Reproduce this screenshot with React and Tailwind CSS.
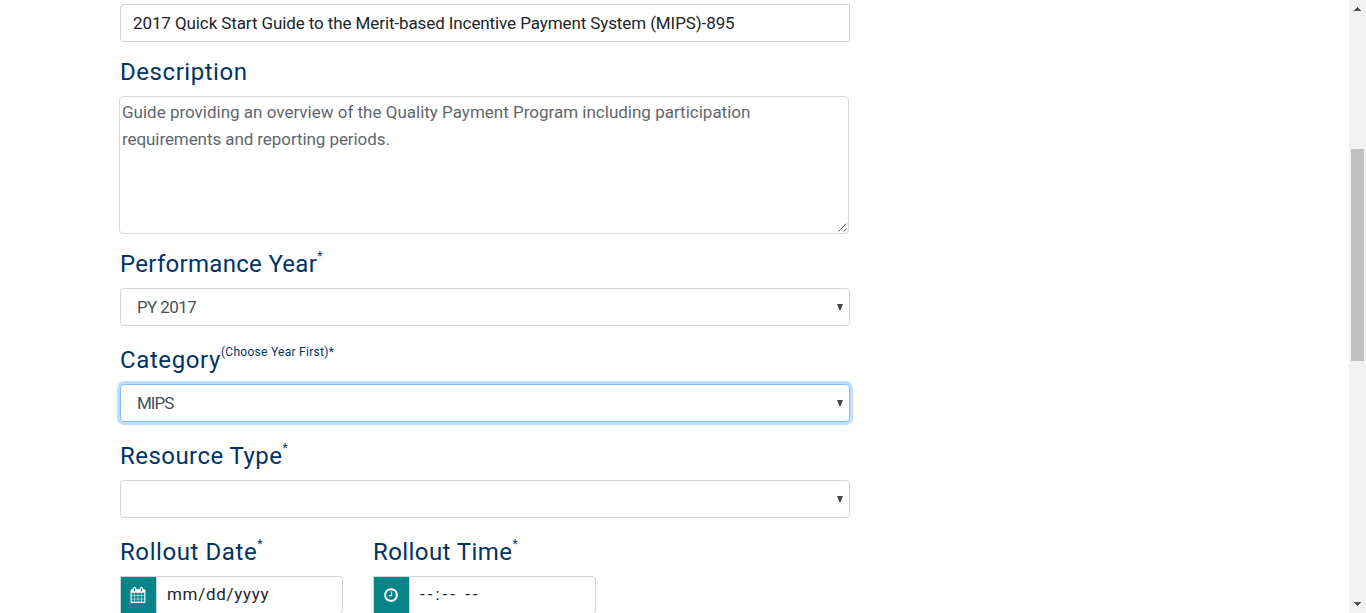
import React from "react";

const CALENDAR =
  "M192 1664h288v-288h-288v288zM544 1664h320v-288h-320v288zM192 1312h288v-320h-288v320zM544 1312h320v-320h-320v320zM192 928h288v-288h-288v288zM928 1664h320v-288h-320v288zM544 928h320v-288h-320v288zM1312 1664h288v-288h-288v288zM928 1312h320v-320h-320v320zM576 448v-288q0-13-9.5-22.5t-22.5-9.5h-64q-13 0-22.5 9.5t-9.5 22.5v288q0 13 9.5 22.5t22.5 9.5h64q13 0 22.5-9.5t9.5-22.5zM1312 1312h288v-320h-288v320zM928 928h320v-288h-320v288zM1312 928h288v-288h-288v288zM1344 448v-288q0-13-9.5-22.5t-22.5-9.5h-64q-13 0-22.5 9.5t-9.5 22.5v288q0 13 9.5 22.5t22.5 9.5h64q13 0 22.5-9.5t9.5-22.5zM1728 384v1280q0 52-38 90t-90 38h-1408q-52 0-90-38t-38-90v-1280q0-52 38-90t90-38h128v-96q0-66 47-113t113-47h64q66 0 113 47t47 113v96h384v-96q0-66 47-113t113-47h64q66 0 113 47t47 113v96h128q52 0 90 38t38 90z";
const CLOCK =
  "M1024 544v448q0 14-9 23t-23 9h-320q-14 0-23-9t-9-23v-64q0-14 9-23t23-9h224v-352q0-14 9-23t23-9h64q14 0 23 9t9 23zm416 352q0-148-73-273t-198-198-273-73-273 73-198 198-73 273 73 273 198 198 273 73 273-73 198-198 73-273zm224 0q0 209-103 385.5t-279.5 279.5-385.5 103-385.5-103-279.5-279.5-103-385.5 103-385.5 279.5-279.5 385.5-103 385.5 103 279.5 279.5 103 385.5z";

function Label({ children, note, size = "h-[58px] pt-[18px]", className = "" }) {
  return (
    <div className={`flex items-start whitespace-nowrap text-[#003366] ${size}`}>
      <span className={`text-[24px] leading-8 ${className}`}>{children}</span>
      {note}
    </div>
  );
}

function Star() {
  return <span className="text-[12px] leading-4">*</span>;
}

function Select({ children, focused = false, className = "" }) {
  return (
    <div
      className={`flex h-[38px] w-[730px] items-center justify-between rounded border bg-white pl-4 pr-[6px] text-[17px] text-[#495057] ${
        focused ? "border-[#80bdff] shadow-[0_0_0_3px_#bfdeff]" : "border-[#ced4da]"
      }`}
    >
      <span className={`pt-[2px] ${className}`}>{children}</span>
      <svg width="6" height="6" viewBox="0 0 6 6" fill="#40464c" aria-hidden="true">
        <path d="M0 0h6L3.6 6H2.4z" />
      </svg>
    </div>
  );
}

function IconField({ icon, children, className = "" }) {
  return (
    <div className="flex h-[38px] w-[223px] overflow-hidden rounded-r border border-[#ced4da] bg-white">
      <div className="flex w-[35px] items-center justify-center bg-[#05848a] pr-px">
        <svg width="16" height="16" viewBox="0 0 1792 1792" fill="white" aria-hidden="true">
          <path d={icon} />
        </svg>
      </div>
      <div className="flex flex-1 items-start border-l border-[#ced4da] pl-[10px] pt-[5px] text-[17px] leading-6 text-[#212529]">
        <span className={className}>{children}</span>
      </div>
    </div>
  );
}

export default function App() {
  return (
    <div className="flex h-[613px] w-full justify-between overflow-hidden bg-white font-[Roboto,sans-serif]">
      <main className="w-[730px] ml-[120px] shrink-0 pt-1">
        <div className="flex h-[38px] items-center rounded-l border border-[#ced4da] pl-3 pt-[2px] text-[17px] whitespace-nowrap text-[#212529]">
          <span className="tracking-[-0.1px]">
            2017 Quick Start Guide to the Merit-based Incentive Payment System (MIPS)-895
          </span>
        </div>

        <Label size="h-[54px] pt-[14px]" className="tracking-[0.55px]">Description</Label>
        <div className="relative -ml-px h-[138px] w-[730px] rounded border border-[#d6d8da] px-[2px] pt-[2px] text-[17px] leading-[27px] whitespace-nowrap text-[#5f676f]">
          <span>Guide providing an overview of the Quality Payment Program including participation</span>
          <br />
          <span className="tracking-[-0.08px]">requirements and reporting periods.</span>
          <svg className="absolute right-[1px] bottom-[1px]" width="9" height="9" viewBox="0 0 9 9" stroke="#555" strokeWidth="1" aria-hidden="true">
            <path d="M0.5 8.5l8-8M5.5 8.5l3-3" />
          </svg>
        </div>

        <Label size="h-[54px] pt-[14px]" className="tracking-[0.3px]" note={<Star />}>Performance Year</Label>
        <Select className="tracking-[-0.6px]">PY 2017</Select>

        <Label
          className="tracking-[0.6px]"
          note={<span className="text-[12px] leading-4 tracking-[0.28px]">(Choose Year First)*</span>}
        >
          Category
        </Label>
        <Select focused className="tracking-[-1px]">MIPS</Select>

        <Label className="tracking-[0.45px]" note={<Star />}>Resource Type</Label>
        <Select />

        <div className="flex gap-[30px]">
          <div>
            <Label className="tracking-[0.58px]" note={<Star />}>Rollout Date</Label>
            <IconField icon={CALENDAR} className="tracking-[0.7px]">mm/dd/yyyy</IconField>
          </div>
          <div>
            <Label className="tracking-[0.42px]" note={<Star />}>Rollout Time</Label>
            <IconField icon={CLOCK} className="tracking-[3px]">--:-- --</IconField>
          </div>
        </div>
      </main>

      <div className="flex w-[17px] shrink-0 flex-col items-center justify-between bg-[#f1f1f1]">
        <svg width="17" height="17" viewBox="0 0 17 17" fill="#505050" shapeRendering="crispEdges" aria-hidden="true">
          <path d="M5 11h7v-1h-1v-1h-1v-1h-1v-1h-1v1h-1v1h-1v1h-1z" />
        </svg>
        <div className="mb-[103px] h-[212px] w-[13px] bg-[#c1c1c1]" />
        <svg width="17" height="17" viewBox="0 0 17 17" fill="#505050" shapeRendering="crispEdges" aria-hidden="true">
          <path d="M5 6h7v1h-1v1h-1v1h-1v1h-1v-1h-1v-1h-1v-1h-1z" />
        </svg>
      </div>
    </div>
  );
}
